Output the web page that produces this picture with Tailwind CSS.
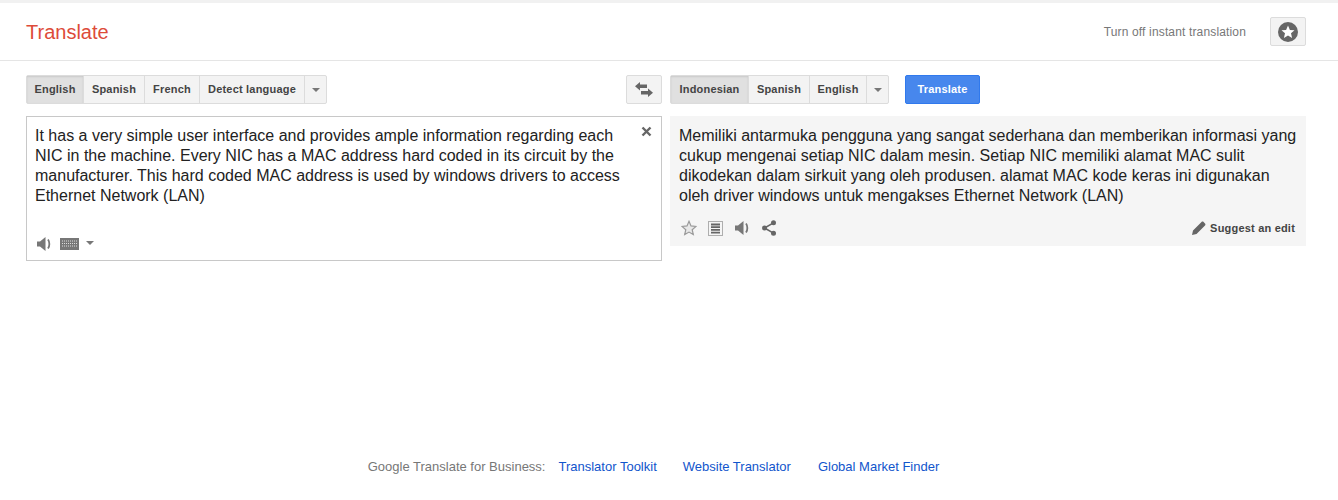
<!DOCTYPE html>
<html lang="en">
<head>
    <meta charset="UTF-8">
    <title>Translate</title>
    <script src="https://cdn.jsdelivr.net/npm/@tailwindcss/browser@4"></script>
</head>
<body class="bg-white font-['Liberation_Sans',Arial,sans-serif] h-[500px] overflow-hidden flex flex-col">

    <div class="h-[3px] bg-[#f1f1f1]"></div>

    <!-- header -->
    <div class="h-[57px] border-b border-[#e5e5e5] box-content flex items-center pl-[26px] pr-[32px]">
        <div class="text-[20px] text-[#dd4b39] leading-none">Translate</div>
        <div class="ml-auto text-[12px] text-[#777] tracking-[0.15px] mr-[24px]">Turn off instant translation</div>
        <button class="w-[36px] h-[29px] border border-[#dcdcdc] bg-[#f3f3f3] rounded-[2px] flex items-center justify-center">
            <svg width="20" height="20" viewBox="0 0 20 20"><circle cx="10" cy="10" r="10" fill="#666"/><path d="M10 3.600l1.900 4.300 4.600.4-3.500 3 1.100 4.600-4.100-2.500-4.100 2.500 1.100-4.600-3.500-3 4.600-.4z" fill="#fff"/></svg>
        </button>
    </div>

    <!-- toolbars -->
    <div class="flex pl-[26px] mt-[14px] h-[29px]">
        <div class="w-[636px] flex">
            <div class="flex h-[29px] border border-[#dcdcdc] rounded-[2px] bg-[#f3f3f3] text-[11px] font-bold text-[#444] tracking-[0.2px]">
                <div class="w-[57px] flex items-center justify-center bg-[#e0e0e0] shadow-[inset_0_1px_2px_rgba(0,0,0,0.1)] border-r border-[#dcdcdc]">English</div>
                <div class="w-[61px] flex items-center justify-center border-r border-[#dcdcdc]">Spanish</div>
                <div class="w-[55px] flex items-center justify-center border-r border-[#dcdcdc]">French</div>
                <div class="w-[105px] flex items-center justify-center border-r border-[#dcdcdc]">Detect language</div>
                <div class="w-[21px] flex items-center justify-center"><div class="w-0 h-0 border-x-[4px] border-x-transparent border-t-[4px] border-t-[#777]"></div></div>
            </div>
            <button class="ml-auto w-[36px] h-[29px] border border-[#dcdcdc] rounded-[2px] bg-[#f3f3f3] flex items-center justify-center">
                <svg width="18" height="15" viewBox="0 0 18 15" fill="#666"><path d="M5 0v2.500h7v3.500H5v2.500L0 4.250z"/><path d="M13 6.500V9H6v3.500h7V15l5-4.250z"/></svg>
            </button>
        </div>
        <div class="ml-[8px] flex">
            <div class="flex h-[29px] border border-[#dcdcdc] rounded-[2px] bg-[#f3f3f3] text-[11px] font-bold text-[#444] tracking-[0.2px]">
                <div class="w-[78px] flex items-center justify-center bg-[#e0e0e0] shadow-[inset_0_1px_2px_rgba(0,0,0,0.1)] border-r border-[#dcdcdc]">Indonesian</div>
                <div class="w-[61px] flex items-center justify-center border-r border-[#dcdcdc]">Spanish</div>
                <div class="w-[57px] flex items-center justify-center border-r border-[#dcdcdc]">English</div>
                <div class="w-[21px] flex items-center justify-center"><div class="w-0 h-0 border-x-[4px] border-x-transparent border-t-[4px] border-t-[#777]"></div></div>
            </div>
            <button class="ml-[16px] w-[75px] h-[29px] bg-[#4787ed] border border-[#3079ed] rounded-[2px] text-white text-[11px] font-bold tracking-[0.2px]">Translate</button>
        </div>
    </div>

    <!-- panels -->
    <div class="flex items-start pl-[26px] mt-[12px] text-[16px] leading-[20px] text-[#222]">
        <div class="relative w-[636px] h-[145px] border border-[#c8c8c8] pt-[9px] pl-[8px] pr-[24px]">
            <p class="whitespace-nowrap">It has a very simple user interface and provides ample information regarding each<br>NIC in the machine. Every NIC has a MAC address hard coded in its circuit by the<br>manufacturer. This hard coded MAC address is used by windows drivers to access<br>Ethernet Network (LAN)</p>
            <svg class="absolute right-[9px] top-[9px]" width="11" height="11" viewBox="0 0 11 11"><path d="M1.500 1.500l8 8M9.500 1.500l-8 8" stroke="#666" stroke-width="2.400"/></svg>
            <div class="absolute left-[10px] bottom-[9px] flex items-center">
                <svg width="14" height="14" viewBox="0 0 14 14" fill="#777"><path d="M0 4.500h3L8.500 0v14L3 9.500H0z"/><path d="M11 2.500c1.800 2.500 1.800 6.500 0 9" fill="none" stroke="#777" stroke-width="1.800"/></svg>
                <svg class="ml-[9px]" width="19" height="12" viewBox="0 0 19 12"><rect width="19" height="12" fill="#777"/><path d="M2 3h15M2 5.500h15M2 8h15" stroke="#ddd" stroke-width="1" stroke-dasharray="1 1"/></svg>
                <div class="ml-[7px] mt-[-3px] w-0 h-0 border-x-[4px] border-x-transparent border-t-[4px] border-t-[#777]"></div>
            </div>
        </div>

        <div class="relative ml-[8px] w-[636px] h-[130px] bg-[#f5f5f5] pt-[10px] pl-[9px]">
            <p class="whitespace-nowrap">Memiliki antarmuka pengguna yang sangat sederhana dan memberikan informasi yang<br>cukup mengenai setiap NIC dalam mesin. Setiap NIC memiliki alamat MAC sulit<br>dikodekan dalam sirkuit yang oleh produsen. alamat MAC kode keras ini digunakan<br>oleh driver windows untuk mengakses Ethernet Network (LAN)</p>
            <div class="absolute left-[11px] top-[104px] flex items-center">
                <svg width="16" height="16" viewBox="0 0 16 16"><path d="M8 1.300l2 4.600 5 .5-3.800 3.300 1.100 4.900L8 12.100l-4.300 2.500 1.100-4.900L1 6.400l5-.5z" fill="#e8e8e8" stroke="#999" stroke-width="1.200"/></svg>
                <svg class="ml-[11px]" width="15" height="15" viewBox="0 0 15 15"><rect x=".5" y=".5" width="14" height="14" fill="none" stroke="#666" stroke-dasharray="1 1"/><path d="M3 3.500h9M3 6.200h9M3 8.900h9M3 11.600h9" stroke="#666" stroke-width="1.800"/></svg>
                <svg class="ml-[12px]" width="14" height="14" viewBox="0 0 14 14" fill="#777"><path d="M0 4.500h3L8.500 0v14L3 9.500H0z"/><path d="M11 2.500c1.800 2.500 1.800 6.500 0 9" fill="none" stroke="#777" stroke-width="1.800"/></svg>
                <svg class="ml-[13px]" width="14" height="16" viewBox="0 0 14 16" fill="#666"><circle cx="11.500" cy="2.800" r="2.500"/><circle cx="11.500" cy="13.200" r="2.500"/><circle cx="2.500" cy="8" r="2.500"/><path d="M2.500 8l9-5.200M2.500 8l9 5.200" stroke="#666" stroke-width="1.500"/></svg>
            </div>
            <div class="absolute right-[11px] top-[104px] h-[16px] flex items-center text-[11px] font-bold text-[#444] tracking-[0.2px]">
                <svg class="mr-[4px]" width="14" height="14" viewBox="0 0 14 14" fill="#666"><path d="M0 14l1-4.500L9.500 1c.6-.6 1.500-.6 2.100 0l1.400 1.400c.6.6.6 1.500 0 2.100L4.500 13z"/></svg>
                Suggest an edit
            </div>
        </div>
    </div>

    <!-- footer -->
    <div class="mt-[197px] flex justify-center text-[13px] leading-[18px] pr-[31px]">
        <span class="text-[#777]">Google Translate for Business:</span>
        <a class="ml-[13px] text-[#1155cc]">Translator Toolkit</a>
        <a class="ml-[26px] text-[#1155cc]">Website Translator</a>
        <a class="ml-[27px] text-[#1155cc]">Global Market Finder</a>
    </div>

</body>
</html>
